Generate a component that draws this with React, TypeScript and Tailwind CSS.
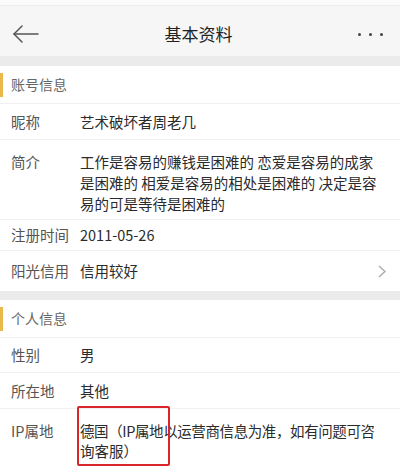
import { ReactNode } from 'react';

function Row({ label, children, className = '', border = true }: { label: string, children: ReactNode, className?: string, border?: boolean }) {
    return (
        <div className={`relative flex px-[11px] ${border ? 'border-b border-[#f1f1f1]' : ''} ${className}`}>
            <div className="w-[69px] shrink-0 text-[#555]">{label}</div>
            <div className="flex-1 text-[#2b2b2b]">{children}</div>
        </div>
    );
}

function SectionTitle({ title }: { title: string }) {
    return (
        <div className="relative flex h-[38px] items-center border-b border-[#f1f1f1] px-[11px] text-[14px] text-[#666]">
            <span className="absolute left-0 top-[7px] h-[24px] w-[3px] bg-[#eab94c]" />
            {title}
        </div>
    );
}

export default function App() {
    return (
        <div className="h-[467px] w-[400px] overflow-hidden bg-white font-['Noto_Sans_CJK_SC','Noto_Sans',sans-serif] text-[14.5px]">
            <div className="h-[6px] border-b border-[#ededed] bg-[#fbfbfb]" />

            {/* title bar */}
            <div className="flex h-[50px] items-center justify-between bg-[#f6f6f6] px-[13px] pt-[6px]">
                <svg width="26" height="18" viewBox="0 0 26 18" fill="none" stroke="#555" strokeWidth="1.5" strokeLinecap="round">
                    <path d="M1 9 H25" />
                    <path d="M9 1 L1 9 L9 17" />
                </svg>
                <h1 className="text-[17px] text-[#222]">基本资料</h1>
                <div className="mr-[4px] flex w-[25px] items-center justify-between">
                    <span className="h-[3px] w-[3px] rounded-full bg-[#444]" />
                    <span className="h-[3px] w-[3px] rounded-full bg-[#444]" />
                    <span className="h-[3px] w-[3px] rounded-full bg-[#444]" />
                </div>
            </div>

            <div className="h-[10px] bg-[#ebebeb]" />

            <SectionTitle title="账号信息" />
            <Row label="昵称" className="h-[36px] items-center">艺术破坏者周老几</Row>
            <Row label="简介" className="pb-[5px] pt-[11px] leading-[21px]">
                <span className="whitespace-nowrap">工作是容易的赚钱是困难的 恋爱是容易的成家</span><br />
                <span className="whitespace-nowrap">是困难的 相爱是容易的相处是困难的 决定是容</span><br />
                <span className="whitespace-nowrap">易的可是等待是困难的</span>
            </Row>
            <Row label="注册时间" className="h-[31px] items-center">2011-05-26</Row>
            <Row label="阳光信用" className="h-[40px] items-center" border={false}>
                <div className="flex items-center justify-between">
                    <span>信用较好</span>
                    <svg width="8" height="13" viewBox="0 0 8 13" fill="none" stroke="#aaa" strokeWidth="1.4" className="mr-[3px]">
                        <path d="M1 1 L7 6.5 L1 12" />
                    </svg>
                </div>
            </Row>

            <div className="h-[9px] bg-[#ebebeb]" />

            <SectionTitle title="个人信息" />
            <Row label="性别" className="h-[35px] items-center">男</Row>
            <Row label="所在地" className="h-[36px] items-center">其他</Row>
            <Row label="IP属地" className="pb-[8px] pt-[12px] leading-[20px]" border={false}>
                <span className="whitespace-nowrap tracking-[-0.4px]">德国（IP属地以运营商信息为准，如有问题可咨</span><br />
                <span>询客服）</span>
                <div className="absolute left-[77px] top-[-3px] h-[60px] w-[93px] rounded-[2px] border-2 border-[#d9262b]" />
            </Row>
        </div>
    );
}
